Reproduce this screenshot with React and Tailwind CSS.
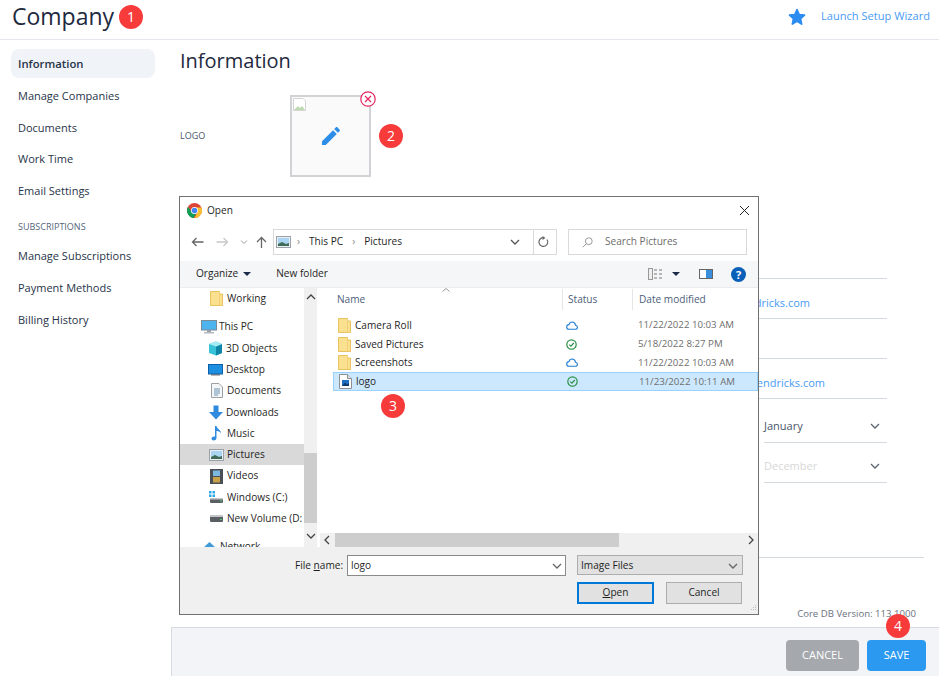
import React from 'react';

const sideTop = ['Manage Companies', 'Documents', 'Work Time', 'Email Settings'];
const sideSubs = ['Manage Subscriptions', 'Payment Methods', 'Billing History'];

const Badge = ({ n, className = '' }) => (
  <span className={`flex h-6 w-6 shrink-0 items-center justify-center rounded-full bg-[#f73b3b] text-[14px] font-medium leading-none text-white ${className}`}>
    {n}
  </span>
);

const Folder = () => (
  <svg width="13" height="15" viewBox="0 0 13 15" className="shrink-0">
    <path d="M0.5 0.5H9.5V3H12.5V14.5H0.5Z" fill="#fbe08f" stroke="#e8c25e" strokeWidth="1" />
    <path d="M9.5 0.5V14.5" stroke="#efcf78" strokeWidth="1" />
  </svg>
);

const ImageFile = () => (
  <svg width="13" height="15" viewBox="0 0 13 15" className="shrink-0">
    <path d="M0.5 0.5H8.5L12.5 4.5V14.5H0.5Z" fill="#fff" stroke="#8a8f96" />
    <path d="M8.5 0.5V4.5H12.5" fill="#e6e6e6" stroke="#8a8f96" />
    <rect x="3" y="6" width="7" height="6" fill="#1f6fc4" />
    <path d="M3 12L6 8.5L8 10.5L10 9V12Z" fill="#123a6b" />
  </svg>
);

const Pictures = ({ className = '' }) => (
  <svg width="15" height="12" viewBox="0 0 15 12" className={`shrink-0 ${className}`}>
    <rect x="0.5" y="0.5" width="14" height="11" fill="#e9eef3" stroke="#9aa2a8" />
    <rect x="2" y="2" width="11" height="8" fill="#a9d4f2" />
    <path d="M2 8L6 6L10 8L13 7V10H2Z" fill="#3f6b57" />
  </svg>
);

const NavIcon = ({ type }) => {
  if (type === 'folder') return <Folder />;
  if (type === 'pc')
    return (
      <svg width="16" height="14" viewBox="0 0 16 14">
        <rect x="0.5" y="0.5" width="15" height="9.5" fill="#4db4ee" stroke="#7c8a96" />
        <rect x="6" y="10" width="4" height="2" fill="#9aa2a8" />
        <rect x="3" y="12" width="10" height="1.5" fill="#b4bac0" />
      </svg>
    );
  if (type === 'cube')
    return (
      <svg width="15" height="15" viewBox="0 0 15 15">
        <path d="M1 3L8 0.5L14 3V12L8 14.5L1 12Z" fill="#36c3d8" />
        <path d="M8 5.5L14 3V12L8 14.5Z" fill="#0f86a8" />
        <path d="M1 3L8 0.5L14 3L8 5.5Z" fill="#a7ecf2" />
      </svg>
    );
  if (type === 'desktop')
    return (
      <svg width="15" height="12" viewBox="0 0 15 12">
        <rect x="0.5" y="0.5" width="14" height="9.5" fill="#1d8fe0" stroke="#0f5fa8" />
        <rect x="3" y="10" width="9" height="1.5" fill="#6c7a86" />
      </svg>
    );
  if (type === 'doc')
    return (
      <svg width="12" height="15" viewBox="0 0 12 15">
        <path d="M0.5 0.5H8L11.5 4V14.5H0.5Z" fill="#f4f6f7" stroke="#9aa2a8" />
        <path d="M3 6H9M3 8H9M3 10H9M3 12H7" stroke="#6b94b5" />
      </svg>
    );
  if (type === 'down')
    return (
      <svg width="14" height="15" viewBox="0 0 14 15">
        <path d="M4.5 0.5H9.5V7H14L7 14.5L0 7H4.5Z" fill="#2f8be0" />
      </svg>
    );
  if (type === 'music')
    return (
      <svg width="11" height="16" viewBox="0 0 11 16">
        <path d="M4 1H5.5C6 4 10 4.5 10 8.5C9 6.5 7 6 5.5 6V13C5.5 14.7 3.8 15.5 2.5 15.5C1.2 15.5 0.5 14.6 0.5 13.6C0.5 12.2 2.3 11.2 4 11.6Z" fill="#2f8be0" />
      </svg>
    );
  if (type === 'pics') return <Pictures />;
  if (type === 'video')
    return (
      <svg width="13" height="15" viewBox="0 0 13 15">
        <rect width="13" height="15" fill="#4a4f55" />
        <rect x="3" y="1.5" width="7" height="5.5" fill="#7db8e0" />
        <rect x="3" y="8" width="7" height="5.5" fill="#c8a24a" />
      </svg>
    );
  if (type === 'win')
    return (
      <svg width="15" height="14" viewBox="0 0 15 14">
        <path d="M0 1H2.5V3.5H0ZM3.5 1H6V3.5H3.5ZM0 4.5H2.5V7H0ZM3.5 4.5H6V7H3.5Z" fill="#2ea6ea" />
        <rect x="1" y="8" width="13" height="5" rx="1" fill="#5a5f64" />
        <rect x="1" y="8" width="13" height="1.5" fill="#c3c7ca" />
        <rect x="11" y="10.5" width="2" height="1" fill="#4fd06a" />
      </svg>
    );
  if (type === 'drive')
    return (
      <svg width="15" height="9" viewBox="0 0 15 9">
        <rect x="1" y="1" width="13" height="7" rx="1" fill="#5a5f64" />
        <rect x="1" y="1" width="13" height="2" fill="#c3c7ca" />
        <rect x="11" y="5" width="2" height="1" fill="#4fd06a" />
      </svg>
    );
  return (
    <svg width="15" height="11" viewBox="0 0 15 11">
      <path d="M1 11V7L7.5 1L14 7V11Z" fill="#3f9bd6" />
    </svg>
  );
};

const navItems = [
  { label: 'Working', icon: 'folder', pad: 'pl-[28px]' },
  { label: 'This PC', icon: 'pc', pad: 'pl-[20px]', gap: true },
  { label: '3D Objects', icon: 'cube', pad: 'pl-[27px]' },
  { label: 'Desktop', icon: 'desktop', pad: 'pl-[27px]' },
  { label: 'Documents', icon: 'doc', pad: 'pl-[28px]' },
  { label: 'Downloads', icon: 'down', pad: 'pl-[27px]' },
  { label: 'Music', icon: 'music', pad: 'pl-[28px]' },
  { label: 'Pictures', icon: 'pics', pad: 'pl-[28px]', active: true },
  { label: 'Videos', icon: 'video', pad: 'pl-[28px]' },
  { label: 'Windows (C:)', icon: 'win', pad: 'pl-[28px]' },
  { label: 'New Volume (D:', icon: 'drive', pad: 'pl-[28px]' },
  { label: 'Network', icon: 'net', pad: 'pl-[21px]', gap: true },
];

const Cloud = () => (
  <svg width="12" height="9" viewBox="0 0 12 9">
    <path d="M3 8.3H9.3C10.5 8.3 11.4 7.4 11.4 6.2C11.4 5.1 10.6 4.3 9.5 4.2C9.2 2.2 7.9 1 6.2 1C4.6 1 3.4 2 3 3.6C1.7 3.7 0.7 4.7 0.7 6C0.7 7.3 1.7 8.3 3 8.3Z" fill="none" stroke="#1f7fd6" strokeWidth="1.1" />
  </svg>
);

const Check = () => (
  <svg width="11" height="11" viewBox="0 0 11 11">
    <circle cx="5.5" cy="5.5" r="4.7" fill="none" stroke="#2e9148" strokeWidth="1.2" />
    <path d="M3.2 5.6L4.9 7.2L7.8 4" fill="none" stroke="#2e9148" strokeWidth="1.2" />
  </svg>
);

const files = [
  { name: 'Camera Roll', status: 'cloud', date: '11/22/2022 10:03 AM' },
  { name: 'Saved Pictures', status: 'ok', date: '5/18/2022 8:27 PM' },
  { name: 'Screenshots', status: 'cloud', date: '11/22/2022 10:03 AM' },
  { name: 'logo', status: 'ok', date: '11/23/2022 10:11 AM', selected: true },
];

const Chevron = ({ className = '', color = '#555' }) => (
  <svg width="10" height="6" viewBox="0 0 10 6" className={`shrink-0 ${className}`}>
    <path d="M1 1L5 5L9 1" fill="none" stroke={color} strokeWidth="1.3" />
  </svg>
);

const OpenDialog = () => (
  <div className="absolute left-[179px] top-[196px] flex h-[419px] w-[580px] flex-col overflow-hidden border border-[#707070] bg-white font-['Open_Sans',sans-serif] text-[10.1px] text-[#1f1f1f]">
    {/* title bar */}
    <div className="flex h-[26px] shrink-0 items-center pl-[7px] pr-[8px] pt-[1px]">
      <svg width="15" height="15" viewBox="0 0 24 24">
        <circle cx="12" cy="12" r="12" fill="#db4437" />
        <path d="M12 24C18.6 24 24 18.6 24 12C24 10 23.5 8.5 23 7H12L17 14.5Z" fill="#fbc02d" />
        <path d="M1.6 5.8C0.6 7.6 0 9.7 0 12C0 18.2 4.6 23.3 10.6 23.9L16 14.5L7 13.5Z" fill="#0f9d58" />
        <circle cx="12" cy="12" r="5.6" fill="#fff" />
        <circle cx="12" cy="12" r="4.4" fill="#4285f4" />
      </svg>
      <span className="ml-[5px]">Open</span>
      <svg width="11" height="11" viewBox="0 0 11 11" className="ml-auto">
        <path d="M1 1L10 10M10 1L1 10" stroke="#222" strokeWidth="1" />
      </svg>
    </div>

    {/* nav bar */}
    <div className="flex h-[38px] shrink-0 items-center pl-[11px]">
      <svg width="13" height="10" viewBox="0 0 13 10">
        <path d="M12.5 5H1.5M5.5 1L1.5 5L5.5 9" fill="none" stroke="#666" strokeWidth="1.3" />
      </svg>
      <svg width="13" height="10" viewBox="0 0 13 10" className="ml-[12px]">
        <path d="M0.5 5H11.5M7.5 1L11.5 5L7.5 9" fill="none" stroke="#c8c8c8" strokeWidth="1.3" />
      </svg>
      <Chevron className="ml-[10px] scale-75" color="#999" />
      <svg width="11" height="12" viewBox="0 0 11 12" className="ml-[7px]">
        <path d="M5.5 12V1.5M1 6L5.5 1.5L10 6" fill="none" stroke="#666" strokeWidth="1.3" />
      </svg>
      <div className="ml-[6px] flex h-[26px] w-[284px] items-center border border-[#d9d9d9] pl-[2px]">
        <Pictures />
        <span className="ml-[6px] text-[#888]">›</span>
        <span className="ml-[9px]">This PC</span>
        <span className="ml-[9px] text-[#888]">›</span>
        <span className="ml-[9px]">Pictures</span>
        <Chevron className="ml-auto mr-[36px]" />
        <span className="absolute left-[353px] h-[26px] w-px bg-[#d9d9d9]" />
        <svg width="12" height="12" viewBox="0 0 12 12" className="absolute left-[357px]">
          <path d="M10 3.5A4.4 4.4 0 1 1 6 1.6" fill="none" stroke="#666" strokeWidth="1.2" />
          <path d="M5.5 0L8.5 2L5.5 4Z" fill="#666" />
        </svg>
      </div>
      <div className="ml-[11px] flex h-[26px] w-[179px] items-center border border-[#d9d9d9] pl-[13px] text-[#6d6d6d]">
        <svg width="11" height="11" viewBox="0 0 11 11">
          <circle cx="6.8" cy="4.2" r="3.4" fill="none" stroke="#999" />
          <path d="M4.4 6.6L0.8 10.2" stroke="#999" />
        </svg>
        <span className="ml-[12px]">Search Pictures</span>
      </div>
    </div>

    {/* toolbar */}
    <div className="flex h-[27px] shrink-0 items-center border-b border-[#ececec] bg-[#f5f6f7] pl-[16px]">
      <span>Organize</span>
      <span className="ml-[5px] h-0 w-0 border-x-[4px] border-t-[4px] border-x-transparent border-t-[#1c2b49]" />
      <span className="ml-[25px]">New folder</span>
      <svg width="15" height="12" viewBox="0 0 15 12" className="ml-auto">
        <rect x="0.5" y="0.5" width="4" height="11" fill="#eee" stroke="#999" />
        <path d="M6 2H9M11 2H14M6 6H9M11 6H14M6 10H9M11 10H14" stroke="#777" />
      </svg>
      <span className="ml-[9px] h-0 w-0 border-x-[4px] border-t-[4px] border-x-transparent border-t-[#1c2b49]" />
      <span className="relative ml-[19px] flex h-[10px] w-[14px] justify-end border border-[#666] bg-white">
        <span className="h-full w-[6px] bg-[#3a8fdc]" />
      </span>
      <span className="ml-[18px] mr-[12px] flex h-[15px] w-[15px] items-center justify-center rounded-full bg-[#0a5fb8] text-[11px] font-bold leading-none text-white">?</span>
    </div>

    {/* panes */}
    <div className="flex min-h-0 flex-1">
      <div className="w-[124px] shrink-0 overflow-hidden">
        {navItems.map((it) => (
          <div
            key={it.label}
            className={`flex h-[21.3px] items-center whitespace-nowrap ${it.pad} ${it.active ? 'bg-[#d9d9d9]' : ''} ${it.gap ? 'mt-[7px]' : ''}`}
          >
            <span className="flex w-[19px] shrink-0 items-center justify-center pr-[2px]">
              <NavIcon type={it.icon} />
            </span>
            <span>{it.label}</span>
          </div>
        ))}
      </div>
      {/* nav scrollbar */}
      <div className="flex w-[13px] shrink-0 flex-col items-center bg-[#f0f0f0]">
        <Chevron className="mt-[6px] rotate-180" color="#444" />
        <div className="mt-[153px] h-[70px] w-full bg-[#cdcdcd]" />
        <Chevron className="mt-[10px]" color="#444" />
      </div>
      {/* file list */}
      <div className="relative ml-[3px] flex min-w-0 flex-1 flex-col">
        <div className="relative flex h-[22px] shrink-0 items-center pt-[1px] text-[#4c607a]">
          <span className="ml-[17px] w-[225px]">Name</span>
          <span className="h-full w-px bg-[#e5e5e5]" />
          <span className="ml-[5px] w-[64px]">Status</span>
          <span className="h-full w-px bg-[#e5e5e5]" />
          <span className="ml-[6px]">Date modified</span>
          <svg width="8" height="4" viewBox="0 0 8 4" className="absolute left-[122px] top-0">
            <path d="M0.5 3.5L4 0.5L7.5 3.5" fill="none" stroke="#999" />
          </svg>
        </div>
        <div className="ml-[13px] mt-[6px]">
          {files.map((f) => (
            <div
              key={f.name}
              className={`flex h-[18.8px] items-center pl-[5px] ${f.selected ? 'border border-[#99d1ff] bg-[#cce8ff]' : ''}`}
            >
              <span className="flex w-[17px] items-center">{f.selected ? <ImageFile /> : <Folder />}</span>
              <span className="w-[211px] whitespace-nowrap">{f.name}</span>
              <span className="flex w-[72px] items-center">{f.status === 'ok' ? <Check /> : <Cloud />}</span>
              <span className="whitespace-nowrap text-[9.7px] text-[#6d6d6d]">{f.date}</span>
            </div>
          ))}
        </div>
        {/* horizontal scrollbar */}
        <div className="mt-auto flex h-[14px] shrink-0 items-center bg-[#f0f0f0]">
          <Chevron className="ml-[2px] rotate-90" color="#444" />
          <div className="ml-[3px] h-full w-[284px] bg-[#cdcdcd]" />
          <Chevron className="ml-auto mr-[2px] -rotate-90" color="#444" />
        </div>
      </div>
    </div>

    {/* bottom */}
    <div className="relative h-[67px] shrink-0 bg-[#f0f0f0]">
      <div className="flex items-start pt-[8px]">
        <span className="ml-[115px] mt-[3px] w-[50px] whitespace-nowrap">
          File <span className="underline">n</span>ame:
        </span>
        <div className="ml-[2px] flex h-[21px] w-[219px] items-center border border-[#8a8a8a] bg-white pl-[3px] pr-[3px]">
          logo
          <Chevron className="ml-auto" color="#666" />
        </div>
        <div className="ml-[11px] flex h-[20px] w-[166px] items-center border border-[#adadad] bg-[#e1e1e1] pl-[3px] pr-[4px] pt-[1px]">
          Image Files
          <Chevron className="ml-auto" color="#666" />
        </div>
      </div>
      <div className="ml-[397px] mt-[6px] flex gap-[12px]">
        <div className="flex h-[22px] w-[77px] items-center justify-center border-2 border-[#0078d7] bg-[#e1e1e1]">
          <span><span className="underline">O</span>pen</span>
        </div>
        <div className="flex h-[22px] w-[76px] items-center justify-center border border-[#adadad] bg-[#e1e1e1]">Cancel</div>
      </div>
      <svg width="8" height="8" viewBox="0 0 8 8" className="absolute bottom-[1px] right-[1px]">
        <path d="M6 0H7V1H6ZM4 2H5V3H4ZM6 2H7V3H6ZM2 4H3V5H2ZM4 4H5V5H4ZM6 4H7V5H6Z" fill="#bbb" />
      </svg>
    </div>
    <Badge n={3} className="absolute left-[201px] top-[197px]" />
  </div>
);

export default function App() {
  return (
    <div className="relative flex h-[676px] w-[939px] flex-col overflow-hidden bg-white font-['Open_Sans',sans-serif] text-[#273449]">
      {/* header */}
      <div className="flex h-[40px] shrink-0 items-center border-b border-[#e6e6ef] pb-[6px] pl-[12px] pr-[9px]">
        <h1 className="text-[23px] font-medium leading-none text-[#1e2a3e]">Company</h1>
        <Badge n={1} className="ml-[5px]" />
        <svg width="20" height="20" viewBox="0 0 24 24" className="ml-auto">
          <path d="M12 3L14.7 9L21 9.7L16.3 14L17.6 20.5L12 17.2L6.4 20.5L7.7 14L3 9.7L9.3 9Z" fill="#2d8cf0" stroke="#2d8cf0" strokeWidth="2" strokeLinejoin="round" />
        </svg>
        <a className="ml-[14px] text-[11.1px] text-[#4a9bf5]">Launch Setup Wizard</a>
      </div>

      <div className="flex min-h-0 flex-1">
        {/* sidebar */}
        <div className="w-[171px] shrink-0 pl-[11px] pr-[16px] pt-[9px] text-[11px]">
          <div className="flex h-[29px] items-center rounded-lg bg-[#f0f3f8] pl-[7px] pt-[1px] text-[11.3px] font-semibold">Information</div>
          {sideTop.map((s, i) => (
            <div key={s} className={`flex items-center pl-[7px] ${i === 0 ? 'mt-[2px] h-[32px]' : 'h-[31.7px]'}`}>{s}</div>
          ))}
          <div className="mt-[10px] flex h-[20px] items-center pl-[7px] text-[9px] text-[#566579]">SUBSCRIPTIONS</div>
          {sideSubs.map((s, i) => (
            <div key={s} className={`flex h-[32px] items-center pl-[7px] ${i === 0 ? 'mt-[3px]' : ''}`}>{s}</div>
          ))}
        </div>

        {/* right column */}
        <div className="flex min-w-0 flex-1 flex-col">
          <div className="min-h-0 flex-1 overflow-hidden pl-[9px]">
            <h2 className="mt-[8px] text-[20px] font-medium leading-[26px] text-[#1e2a3e]">Information</h2>
            <div className="mt-[21px] flex items-center">
              <span className="w-[110px] text-[9px] text-[#4a5568]">LOGO</span>
              <div className="relative flex h-[82px] w-[81px] items-center justify-center border-2 border-[#d0d2d6] bg-[#fafafa]">
                <svg width="16" height="16" viewBox="0 0 16 16" className="absolute left-[1px] top-[1px]">
                  <path d="M0.5 0.5H10L12.5 3V12.5H0.5Z" fill="#fff" stroke="#d4d4d4" />
                  <path d="M1 12L5 8L7 10L9 8L12 12Z" fill="#bcd9b0" />
                </svg>
                <svg width="24" height="24" viewBox="0 0 24 24">
                  <path d="M3 17.25V21h3.75L17.81 9.94l-3.75-3.75L3 17.25zM20.71 7.04c.39-.39.39-1.02 0-1.41l-2.34-2.34c-.39-.39-1.02-.39-1.41 0l-1.83 1.83 3.75 3.75 1.83-1.83z" fill="#2d8ee8" />
                </svg>
                <svg width="16" height="16" viewBox="0 0 16 16" className="absolute -right-[7px] -top-[6px]">
                  <circle cx="8" cy="8" r="7.2" fill="#fff" stroke="#e8245f" strokeWidth="1.2" />
                  <path d="M5 5L11 11M11 5L5 11" stroke="#e8245f" strokeWidth="1.2" />
                </svg>
              </div>
              <Badge n={2} className="ml-[8px]" />
            </div>

            {/* form behind the dialog */}
            <div className="mt-[101px] w-[707px] border-t border-[#d5d9e0]">
              <div className="flex h-[40px] items-center justify-end border-b border-[#d5d9e0] pr-[77px] pt-[10px] text-[11px] text-[#4a9bf5]">support@hendricks.com</div>
              <div className="h-[40px] border-b border-[#d5d9e0]" />
              <div className="flex h-[40px] items-center justify-end border-b border-[#d5d9e0] pr-[62px] pt-[10px] text-[11px] text-[#4a9bf5]">billing@hendricks.com</div>
              <div className="ml-[584px] flex h-[44px] items-center justify-between border-b border-[#d5d9e0] pr-[7px] pt-[11px] text-[11px] text-[#4a5568]">
                January
                <Chevron color="#5a6472" />
              </div>
              <div className="ml-[584px] flex h-[40px] items-center justify-between border-b border-[#d5d9e0] pr-[7px] pt-[7px] text-[11px] text-[#d8d8d8]">
                December
                <Chevron color="#5a6472" />
              </div>
            </div>
            <div className="mt-[74px] w-[744px] border-t border-[#d5d9e0]" />
            <div className="mt-[49px] flex w-[736px] justify-end text-[9.6px] text-[#6b7280]">Core DB Version: 113.1000</div>
          </div>

          {/* footer */}
          <div className="flex h-[49px] shrink-0 items-start justify-end gap-[8px] border-l border-t border-[#d5d9e0] bg-[#f3f4f7] pr-[13px] pt-[12px]">
            <button className="h-[31px] w-[73px] rounded-[4px] bg-[#a5a8ad] text-[11px] text-white">CANCEL</button>
            <button className="h-[31px] w-[59px] rounded-[4px] bg-[#2b99f0] text-[11px] text-white">SAVE</button>
          </div>
        </div>
      </div>

      <OpenDialog />
      <Badge n={4} className="absolute left-[886px] top-[614px]" />
    </div>
  );
}
